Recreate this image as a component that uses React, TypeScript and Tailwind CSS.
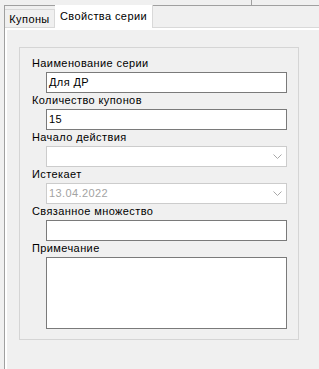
type Field = {
  label: string;
  value?: string;
  kind: 'text' | 'combo' | 'memo';
};

const fields: Field[] = [
  { label: 'Наименование серии', value: 'Для ДР', kind: 'text' },
  { label: 'Количество купонов', value: '15', kind: 'text' },
  { label: 'Начало действия', kind: 'combo' },
  { label: 'Истекает', value: '13.04.2022', kind: 'combo' },
  { label: 'Связанное множество', kind: 'text' },
  { label: 'Примечание', kind: 'memo' },
];

function Chevron() {
  return (
    <svg viewBox="0 0 9 5" className="h-[5px] w-[9px]" fill="none">
      <polyline points="0.5,0.5 4.5,4.5 8.5,0.5" stroke="#a8a8a8" strokeWidth="1" />
    </svg>
  );
}

function FieldRow({ field }: { field: Field }) {
  const label = <div className="h-[16px] pl-[12px] pt-[1px] leading-[13px]">{field.label}</div>;

  if (field.kind === 'combo') {
    return (
      <div className="flex flex-col">
        {label}
        <div className="ml-[26px] flex h-[21px] w-[241px] items-center justify-between border border-[#cccccc] bg-white pl-[2px] pr-[4px] text-[#a3a3a3]">
          <span className="leading-[13px]">{field.value ?? ''}</span>
          <Chevron />
        </div>
      </div>
    );
  }

  return (
    <div className="flex flex-col">
      {label}
      <div
        className={`ml-[26px] w-[241px] border border-[#7a7a7a] bg-white pl-[2px] leading-[13px] ${
          field.kind === 'memo' ? 'h-[72px] pt-[1px]' : 'flex h-[21px] items-center'
        }`}
      >
        {field.value ?? ''}
      </div>
    </div>
  );
}

export default function App() {
  return (
    <div
      className="h-[369px] w-[319px] overflow-hidden bg-[#f0f0f0] text-[11px] tracking-[0.4px] text-black"
      style={{ fontFamily: '"Liberation Sans", Arial, sans-serif' }}
    >
      <div className="flex h-[5px]">
        <div className="ml-[251px] h-full w-px bg-[#a0a0a0]" />
      </div>
      <div className="ml-[4px] flex h-[364px] flex-col border-l border-t border-[#a0a0a0]">
        {/* tabs */}
        <div className="flex h-[22px] items-end border-b border-[#d9d9d9]">
          <div className="flex h-[18px] w-[50px] items-center justify-center border-r border-t border-[#d9d9d9] bg-[#f0f0f0] pt-[1px]">
            Купоны
          </div>
          <div className="-mb-px flex h-[23px] w-[98px] items-center justify-center border-r border-[#d9d9d9] bg-white pb-[1px]">
            Свойства серии
          </div>
        </div>
        {/* page */}
        <div className="flex-1 border-l-2 border-t-2 border-white bg-[#f0f0f0] pl-[12px] pt-[17px]">
          <div className="flex h-[293px] w-[280px] flex-col border border-[#d5d5d5] pt-[8px]">
            {fields.map((field) => (
              <FieldRow key={field.label} field={field} />
            ))}
          </div>
        </div>
      </div>
    </div>
  );
}
